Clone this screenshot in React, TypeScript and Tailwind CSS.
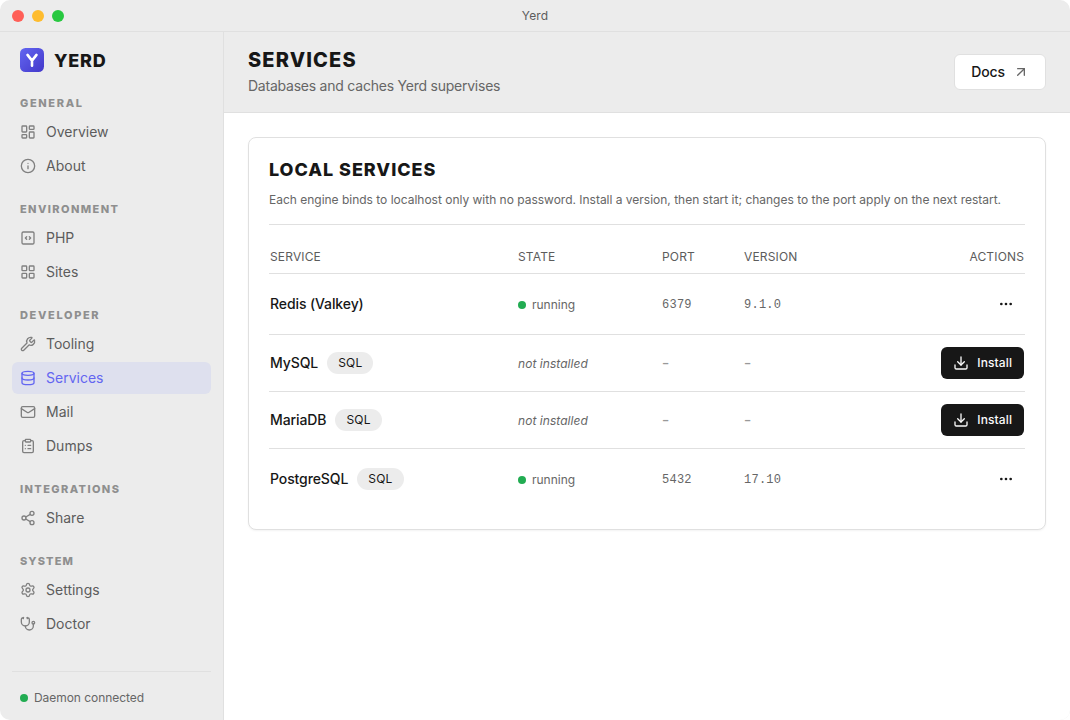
import type { ComponentType, ReactNode } from 'react';
import {
  ArrowUpRight,
  ClipboardList,
  Database,
  Download,
  Ellipsis,
  Info,
  LayoutDashboard,
  LayoutGrid,
  Mail,
  Settings,
  Share2,
  Stethoscope,
  Wrench,
} from 'lucide-react';

type IconType = ComponentType<{ className?: string; strokeWidth?: number | string }>;

interface NavItem {
  label: string;
  icon: IconType;
  active?: boolean;
}

interface NavGroup {
  title: string;
  tracking: string;
  items: NavItem[];
}

interface Service {
  name: string;
  sql: boolean;
  running: boolean;
  port?: string;
  version?: string;
}

function PhpIcon({ className, strokeWidth = 2 }: { className?: string; strokeWidth?: number | string }) {
  return (
    <svg
      viewBox="0 0 24 24"
      fill="none"
      stroke="currentColor"
      strokeWidth={strokeWidth}
      strokeLinecap="round"
      strokeLinejoin="round"
      className={className}
    >
      <rect x="3" y="3" width="18" height="18" rx="2" />
      <path d="m10 10-2 2 2 2" />
      <path d="m14 14 2-2-2-2" />
    </svg>
  );
}

const NAV: NavGroup[] = [
  {
    title: 'General',
    tracking: 'tracking-[1.65px]',
    items: [
      { label: 'Overview', icon: LayoutDashboard },
      { label: 'About', icon: Info },
    ],
  },
  {
    title: 'Environment',
    tracking: 'tracking-[1.4px]',
    items: [
      { label: 'PHP', icon: PhpIcon },
      { label: 'Sites', icon: LayoutGrid },
    ],
  },
  {
    title: 'Developer',
    tracking: 'tracking-[1.65px]',
    items: [
      { label: 'Tooling', icon: Wrench },
      { label: 'Services', icon: Database, active: true },
      { label: 'Mail', icon: Mail },
      { label: 'Dumps', icon: ClipboardList },
    ],
  },
  {
    title: 'Integrations',
    tracking: 'tracking-[1.4px]',
    items: [{ label: 'Share', icon: Share2 }],
  },
  {
    title: 'System',
    tracking: 'tracking-[1.1px]',
    items: [
      { label: 'Settings', icon: Settings },
      { label: 'Doctor', icon: Stethoscope },
    ],
  },
];

const SERVICES: Service[] = [
  { name: 'Redis (Valkey)', sql: false, running: true, port: '6379', version: '9.1.0' },
  { name: 'MySQL', sql: true, running: false },
  { name: 'MariaDB', sql: true, running: false },
  { name: 'PostgreSQL', sql: true, running: true, port: '5432', version: '17.10' },
];

function TitleBar() {
  return (
    <div className="grid h-8 shrink-0 grid-cols-[1fr_auto_1fr] items-center border-b border-[#e0e0e0] px-3">
      <div className="flex gap-2">
        <span className="size-3 rounded-full bg-[#ff5f57]" />
        <span className="size-3 rounded-full bg-[#febc2e]" />
        <span className="size-3 rounded-full bg-[#28c840]" />
      </div>
      <span className="text-xs tracking-[0.1px] text-[#5c5c5c]">Yerd</span>
    </div>
  );
}

function Logo() {
  return (
    <div className="flex h-6 items-center gap-2.5 px-2">
      <svg viewBox="0 0 24 24" className="size-6">
        <defs>
          <linearGradient id="logo" x1="0" y1="0" x2="1" y2="1">
            <stop offset="0" stopColor="#6366f1" />
            <stop offset="1" stopColor="#4338ca" />
          </linearGradient>
        </defs>
        <rect width="24" height="24" rx="5.5" fill="url(#logo)" />
        <path
          d="M7.5 6.9 12 12.6 16.5 6.9M12 12.6V17.7"
          fill="none"
          stroke="#fff"
          strokeWidth="2.6"
          strokeLinecap="round"
          strokeLinejoin="round"
        />
      </svg>
      <span className="pt-0.5 text-[18px] leading-6 font-extrabold tracking-[0.8px] text-[#171717]">YERD</span>
    </div>
  );
}

function Sidebar() {
  return (
    <aside className="flex w-56 shrink-0 flex-col border-r border-[#e0e0e0] px-3 pt-4">
      <Logo />
      <nav className="mt-5 flex flex-1 flex-col gap-4">
        {NAV.map((group) => (
          <div key={group.title} className="flex flex-col gap-0.5">
            <h2 className={`mb-0.5 h-5 px-2 text-[11px] leading-[22px] font-extrabold uppercase text-[#8f8f8f] ${group.tracking}`}>
              {group.title}
            </h2>
            {group.items.map(({ label, icon: Icon, active }) => (
              <a
                key={label}
                className={`flex h-8 items-center gap-2.5 rounded-md px-2 text-sm ${
                  active ? 'bg-[#dee0ee] text-[#6366f1]' : 'text-[#5c5c5c]'
                }`}
              >
                <Icon className={active ? 'size-4' : 'size-4 text-[#808080]'} strokeWidth={2} />
                {label}
              </a>
            ))}
          </div>
        ))}
      </nav>
      <div className="flex h-[49px] items-center gap-1.5 border-t border-[#e0e0e0] px-2 pt-1 text-xs tracking-[-0.05px] text-[#666]">
        <span className="size-2 rounded-full bg-[#22ac52]" />
        Daemon connected
      </div>
    </aside>
  );
}

function Th({ children, className = '' }: { children: ReactNode; className?: string }) {
  return <th className={`px-px pb-2 text-left align-bottom text-xs font-normal tracking-[0.15px] text-[#5c5c5c] uppercase ${className}`}>{children}</th>;
}

function MonoCell({ value }: { value?: string }) {
  return (
    <td className="px-px pt-0.5 font-['Liberation_Mono',monospace] text-xs tracking-[0.25px] text-[#666]">
      {value ?? <span className="font-bold text-[#999]">–</span>}
    </td>
  );
}

function ServiceRow({ service }: { service: Service }) {
  const { name, sql, running, port, version } = service;
  return (
    <tr className={`border-b border-[#e0e0e0] last:border-0 ${running ? 'h-[61px]' : 'h-[57px]'}`}>
      <td className="px-px">
        <div className="flex items-center gap-[9px] text-sm font-medium tracking-[-0.1px] text-[#171717]">
          {name}
          {sql && (
            <span className="flex h-[22px] items-center rounded-full bg-[#ececec] px-[11px] text-xs font-normal tracking-[0.2px]">
              SQL
            </span>
          )}
        </div>
      </td>
      <td className="px-px pt-0.5 text-xs text-[#666]">
        {running ? (
          <span className="flex items-center gap-1.5">
            <span className="size-2 rounded-full bg-[#22ac52]" />
            running
          </span>
        ) : (
          <span className="tracking-[0.05px] italic">not installed</span>
        )}
      </td>
      <MonoCell value={port} />
      <MonoCell value={version} />
      <td className="px-px">
        <div className="flex justify-end">
          {running ? (
            <button className="flex size-9 items-center justify-center text-[#171717]">
              <Ellipsis className="size-4" strokeWidth={2} />
            </button>
          ) : (
            <button className="flex h-8 items-center gap-2 rounded-md bg-[#171717] px-3 text-xs font-medium tracking-[0.1px] text-[#fafafa]">
              <Download className="size-4" strokeWidth={2} />
              Install
            </button>
          )}
        </div>
      </td>
    </tr>
  );
}

function ServicesCard() {
  return (
    <section className="h-[393px] rounded-lg border border-[#e0e0e0] bg-white px-5 pt-5 shadow-xs">
      <h2 className="text-[18px] leading-6 font-extrabold tracking-[0.95px] text-[#171717] uppercase">Local Services</h2>
      <p className="mt-[9px] border-b border-[#e0e0e0] pb-[15px] text-xs leading-[18px] tracking-[-0.01px] text-[#666]">
        Each engine binds to localhost only with no password. Install a version, then start it; changes to the port
        apply on the next restart.
      </p>
      <table className="w-full table-fixed border-collapse text-[#666]">
        <thead>
          <tr className="h-12 border-b border-[#e0e0e0]">
            <Th className="w-[248px]">Service</Th>
            <Th className="w-[144px]">State</Th>
            <Th className="w-[82px]">Port</Th>
            <Th className="w-[120px]">Version</Th>
            <Th className="text-right">Actions</Th>
          </tr>
        </thead>
        <tbody>
          {SERVICES.map((service) => (
            <ServiceRow key={service.name} service={service} />
          ))}
        </tbody>
      </table>
    </section>
  );
}

export default function App() {
  return (
    <div className="flex h-screen w-screen flex-col overflow-hidden rounded-[10px] bg-[#ececec] font-['Inter',sans-serif]">
      <TitleBar />
      <div className="flex min-h-0 flex-1">
        <Sidebar />
        <main className="flex min-w-0 flex-1 flex-col bg-white">
          <header className="flex h-[81px] shrink-0 items-center justify-between border-b border-[#e0e0e0] bg-[#ececec] px-6">
            <div>
              <h1 className="text-xl leading-7 font-extrabold tracking-[1.15px] text-[#171717] uppercase">Services</h1>
              <p className="text-sm leading-6 tracking-[-0.23px] text-[#666]">Databases and caches Yerd supervises</p>
            </div>
            <button className="flex h-9 items-center gap-2 rounded-md border border-[#e0e0e0] bg-white px-4 text-sm font-medium tracking-[-0.1px] text-[#171717]">
              Docs
              <ArrowUpRight className="size-4 text-[#666]" strokeWidth={2} />
            </button>
          </header>
          <div className="p-6">
            <ServicesCard />
          </div>
        </main>
      </div>
    </div>
  );
}
